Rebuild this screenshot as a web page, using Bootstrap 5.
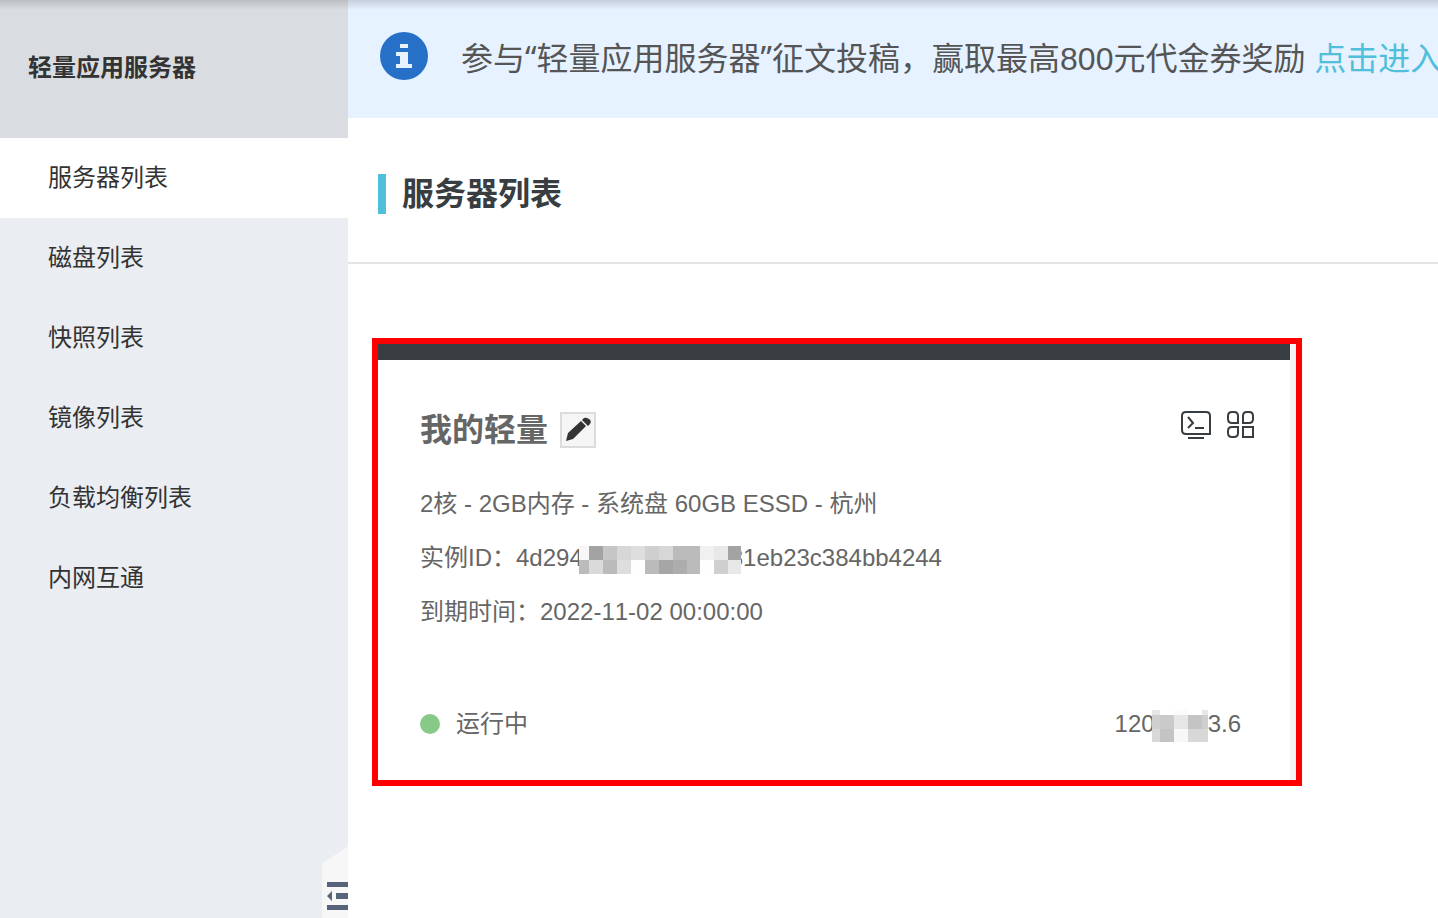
<!DOCTYPE html>
<html lang="zh-CN">
<head>
<meta charset="utf-8">
<meta name="viewport" content="width=device-width, initial-scale=1">
<title>轻量应用服务器</title>
<link rel="stylesheet" href="https://cdn.jsdelivr.net/npm/bootstrap@5.3.0/dist/css/bootstrap.min.css">
<style>
body { font-family: "Liberation Sans", "Noto Sans CJK SC", sans-serif; font-size: 24px; line-height: 36px; font-kerning: none; color: #333; background: #fff; }
.page-shade { height: 10px; background: linear-gradient(rgba(0,0,0,.14), rgba(0,0,0,0)); pointer-events: none; }
.side { width: 348px; background: #eaedf2; }
.side-title { height: 138px; padding: 0 28px 2px; font-size: 24px; background: #d9dde2; color: #333; }
.side .nav-link { height: 80px; padding: 0 48px; color: #333; display: flex; align-items: center; }
.side .nav-link.active { background: #fff; }
.side-toggle { width: 26px; height: 72px; background: #f7f7f7; clip-path: polygon(0 18px, 100% 0, 100% 100%, 0 100%); }
.notice { height: 118px; padding: 0 32px 2px; gap: 33px; font-size: 32px; background: #e6f2ff; color: #555; white-space: nowrap; }
.notice a { color: #4fbfdb; }
.quote { font-family: "Noto Sans", sans-serif; }
.page-head { height: 146px; padding: 8px 30px 0; border-bottom: 2px solid #e5e5e5; }
.page-head h1 { font-size: 32px; line-height: 40px; border-left: 8px solid #50bfda; padding-left: 16px; color: #373d41; }
.highlight { max-width: 930px; border: 6px solid #f00; margin: 74px 24px 0; background: #f4f4f4; padding-right: 6px; }
.server { border-top: 16px solid #373d41; color: #666; padding: 42px 36px 38px 42px; background: #fff; }
.server h2 { font-size: 32px; line-height: 56px; color: #666; }
.edit { width: 36px; height: 36px; margin-left: 12px; border: 2px solid #dcdcdc; background: #f5f5f5; }
.tools { gap: 16px; margin-bottom: 10px; }
.detail { line-height: 54px; margin-top: 19px; }
.cover { position: relative; vertical-align: middle; }
.cover-id { margin: 0 -11px 0 -4px; }
.cover-ip { margin: 0 0 0 -3px; }
.state { margin-top: 67px; padding-right: 13px; }
.dot { width: 20px; height: 20px; background: #87ca87; }
</style>
</head>
<body class="overflow-hidden">
<div class="page-shade fixed-top"></div>
<div class="d-flex min-vh-100">
  <aside class="side flex-shrink-0 d-flex flex-column">
    <div class="side-title d-flex align-items-center fw-bold">轻量应用服务器</div>
    <nav class="nav flex-column">
      <a class="nav-link active" href="#" aria-current="page">服务器列表</a>
      <a class="nav-link" href="#">磁盘列表</a>
      <a class="nav-link" href="#">快照列表</a>
      <a class="nav-link" href="#">镜像列表</a>
      <a class="nav-link" href="#">负载均衡列表</a>
      <a class="nav-link" href="#">内网互通</a>
    </nav>
    <button type="button" class="side-toggle border-0 p-0 mt-auto ms-auto d-block" aria-label="收起菜单">
      <svg class="d-block" width="26" height="72" fill="#56637a"><path d="M5 36h21v5H5zM14 47h12v6H14zM5 59h21v5H5zM5 50l5-5v10z"/></svg>
    </button>
  </aside>
  <main class="flex-grow-1 overflow-hidden">
    <div class="notice d-flex align-items-center">
      <svg class="flex-shrink-0 mb-1" width="48" height="48"><circle cx="24" cy="24" r="24" fill="#2670c7"/><path fill="#e6f2ff" d="M20 12h8v4h-8zM16 20h12v12h4v4H16v-4h4v-8h-4z"/></svg>
      <div>参与<span class="quote">“</span>轻量应用服务器<span class="quote">”</span>征文投稿，赢取最高800元代金券奖励 <a class="text-decoration-none" href="#">点击进入</a></div>
    </div>
    <header class="page-head d-flex align-items-center">
      <h1 class="fw-bold mb-0">服务器列表</h1>
    </header>
    <div class="highlight">
      <section class="server">
        <div class="d-flex align-items-center">
          <h2 class="fw-bold mb-0">我的轻量</h2>
          <button type="button" class="edit p-0" aria-label="编辑名称">
            <svg class="d-block" width="32" height="32" fill="#333"><path d="M4 27l2-8L19 7l5 5L11 25zM20 6l2-2q2-1 5 1t1 5l-2 2z"/></svg>
          </button>
          <div class="tools d-flex ms-auto">
            <a href="#" aria-label="远程连接"><svg class="d-block" width="30" height="30" fill="none" stroke="#373d41" stroke-width="2"><path d="M5 2h20q4 0 4 4v18H5q-4 0-4-4V6q0-4 4-4zM7 7l5 6-5 5M14 18h9M7 28h16"/></svg></a>
            <a href="#" aria-label="更多操作"><svg class="d-block" width="27" height="30" fill="none" stroke="#373d41" stroke-width="2"><path d="M5 2h2q4 0 4 4v7H5q-4 0-4-4V6q0-4 4-4zM20 2h2q4 0 4 4v3q0 4-4 4h-6V6q0-4 4-4zM5 17h6v6q0 4-4 4H5q-4 0-4-4v-2q0-4 4-4zM16 17h10v10H16z"/></svg></a>
          </div>
        </div>
        <div class="detail">
          <div>2核 - 2GB内存 - 系统盘 60GB ESSD - 杭州</div>
          <div>实例ID：4d294<svg class="cover cover-id" width="162" height="28" shape-rendering="crispEdges"><path fill="#f7f7f7" d="M0 0h10v14H0z"/><path fill="#a3a3a3" d="M10 0h14v14H10zM149 0h13v14h-13z"/><path fill="#c6c6c6" d="M24 0h14v14H24z"/><path fill="#d7d7d7" d="M38 0h14v14H38zM80 0h14v14H80z"/><path fill="#dedede" d="M52 0h14v14H52zM38 14h14v14H38z"/><path fill="#cfcfcf" d="M66 0h14v14H66zM135 14h14v14h-14z"/><path fill="#bbb" d="M94 0h27v14H94zM0 14h10v14H0zM24 14h14v14H24zM66 14h14v14H66zM108 14h13v14h-13z"/><path fill="#f0f0f0" d="M121 0h14v14h-14z"/><path fill="#e8e8e8" d="M135 0h14v14h-14zM149 14h13v14h-13z"/><path fill="#dadada" d="M10 14h14v14H10z"/><path fill="#fefefe" d="M52 14h14v14H52zM121 14h14v14h-14z"/><path fill="#a6a6a6" d="M80 14h14v14H80z"/><path fill="#adadad" d="M94 14h14v14H94z"/></svg>81eb23c384bb4244</div>
          <div>到期时间：2022-11-02 00:00:00</div>
        </div>
        <div class="state d-flex align-items-center">
          <span class="dot rounded-circle me-3"></span>
          <span>运行中</span>
          <span class="ms-auto">120<svg class="cover cover-ip" width="56" height="32" shape-rendering="crispEdges"><path fill="#fff" d="M0 0h56v32H0z"/><path fill="#e7e7e7" d="M0 0h8v5H0zM50 0h6v5h-6zM22 5h14v14H22z"/><path fill="#fbfbfb" d="M22 0h14v5H22z"/><path fill="#cfcfcf" d="M0 5h8v14H0zM50 5h6v14h-6z"/><path fill="#cacaca" d="M8 5h14v14H8z"/><path fill="#c4c4c4" d="M36 5h14v14H36zM8 19h14v13H8z"/><path fill="#d8d8d8" d="M0 19h8v13H0zM36 19h20v13H36z"/><path fill="#f8f8f8" d="M22 19h14v13H22z"/></svg>3.6</span>
        </div>
      </section>
    </div>
  </main>
</div>
<script src="https://cdn.jsdelivr.net/npm/bootstrap@5.3.0/dist/js/bootstrap.bundle.min.js"></script>
</body>
</html>
